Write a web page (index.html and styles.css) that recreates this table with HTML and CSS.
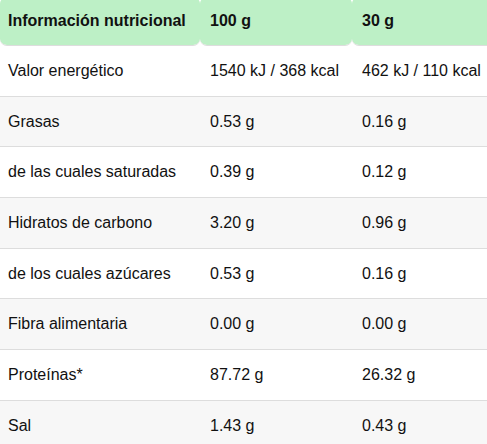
FILE: index.html
```html
<!DOCTYPE html>
<html lang="es">
<head>
<meta charset="utf-8">
<link rel="stylesheet" href="styles.css">
</head>
<body>
<table class="nutri">
  <thead>
    <tr>
      <th class="c1">Información nutricional</th>
      <th class="c2">100 g</th>
      <th class="c3">30 g</th>
    </tr>
  </thead>
  <tbody>
    <tr><td class="c1">Valor energético</td><td class="c2">1540 kJ / 368 kcal</td><td class="c3">462 kJ / 110 kcal</td></tr>
    <tr><td class="c1">Grasas</td><td class="c2">0.53 g</td><td class="c3">0.16 g</td></tr>
    <tr><td class="c1">de las cuales saturadas</td><td class="c2">0.39 g</td><td class="c3">0.12 g</td></tr>
    <tr><td class="c1">Hidratos de carbono</td><td class="c2">3.20 g</td><td class="c3">0.96 g</td></tr>
    <tr><td class="c1">de los cuales azúcares</td><td class="c2">0.53 g</td><td class="c3">0.16 g</td></tr>
    <tr><td class="c1">Fibra alimentaria</td><td class="c2">0.00 g</td><td class="c3">0.00 g</td></tr>
    <tr><td class="c1">Proteínas*</td><td class="c2">87.72 g</td><td class="c3">26.32 g</td></tr>
    <tr><td class="c1">Sal</td><td class="c2">1.43 g</td><td class="c3">0.43 g</td></tr>
  </tbody>
</table>
</body>
</html>
```
FILE: styles.css
```css
html, body {
  margin: 0;
  padding: 0;
  background: #ffffff;
  overflow: hidden;
}
body {
  font-family: "Liberation Sans", Arial, sans-serif;
  font-size: 16px;
  color: #111111;
}
.nutri {
  border-collapse: separate;
  border-spacing: 0;
  width: 500px;
  margin-top: -3px;
  table-layout: fixed;
}
.nutri .c1 { width: 200px; padding-left: 8px; }
.nutri .c2 { width: 152px; padding-left: 10px; }
.nutri .c3 { padding-left: 10px; }
.nutri th {
  background: #bdf0c6;
  font-weight: bold;
  text-align: left;
  height: 49px;
  padding-top: 0;
  padding-bottom: 0;
  box-sizing: border-box;
  border-radius: 7px;
  border-bottom: 1px solid #dddddd;
  background-clip: padding-box;
}
.nutri td {
  height: 50.7px;
  box-sizing: border-box;
  padding-top: 0;
  padding-bottom: 0;
  border-bottom: 1px solid #dddddd;
  vertical-align: middle;
}
.nutri tbody tr:nth-child(even) td {
  background: #f7f7f7;
}
```
